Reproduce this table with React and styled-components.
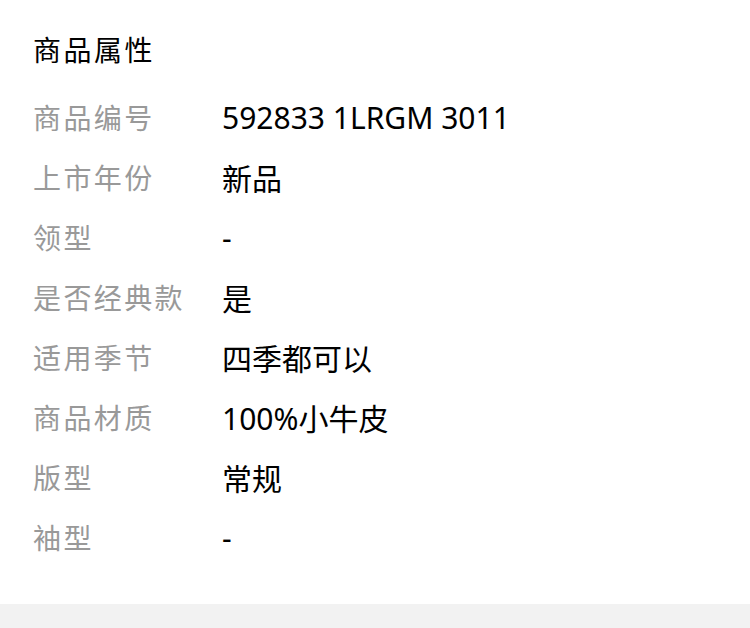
import React from "react";
import styled, { createGlobalStyle } from "styled-components";

const attrs = [
  { label: "商品编号", value: "592833 1LRGM 3011" },
  { label: "上市年份", value: "新品" },
  { label: "领型", value: "-" },
  { label: "是否经典款", value: "是" },
  { label: "适用季节", value: "四季都可以" },
  { label: "商品材质", value: "100%小牛皮" },
  { label: "版型", value: "常规" },
  { label: "袖型", value: "-" },
];

const App = () => {
  return (
    <>
      <GlobalStyle />
      <Page>
        <Section>
          <Title>商品属性</Title>
          <List>
            {attrs.map((item) => (
              <Row key={item.label}>
                <Label>{item.label}</Label>
                <Value>{item.value}</Value>
              </Row>
            ))}
          </List>
        </Section>
        <Divider />
      </Page>
    </>
  );
};

/* Start Styling */
const GlobalStyle = createGlobalStyle`
  body {
    margin: 0;
    background: #fff;
    font-family: "Noto Sans", "Noto Sans CJK SC", sans-serif;
  }
`;
const Page = styled.div`
  width: 750px;
  min-height: 628px;
  display: flex;
  flex-direction: column;
`;
const Section = styled.div`
  padding: 20px 33px 37px;
  background: #fff;
`;
const Title = styled.h2`
  margin: 0 0 7px;
  font-size: 28px;
  font-weight: 400;
  line-height: 60px;
  letter-spacing: 2.5px;
  color: #000;
`;
const List = styled.div`
  display: flex;
  flex-direction: column;
`;
const Row = styled.div`
  display: flex;
  align-items: center;
  height: 60px;
`;
const Label = styled.span`
  width: 189px;
  flex-shrink: 0;
  font-size: 28px;
  letter-spacing: 2.4px;
  color: #999;
`;
const Value = styled.span`
  font-size: 30px;
  color: #000;
`;
const Divider = styled.div`
  flex: 1;
  background: #f2f2f2;
`;
/* End Styling */

export default App;
